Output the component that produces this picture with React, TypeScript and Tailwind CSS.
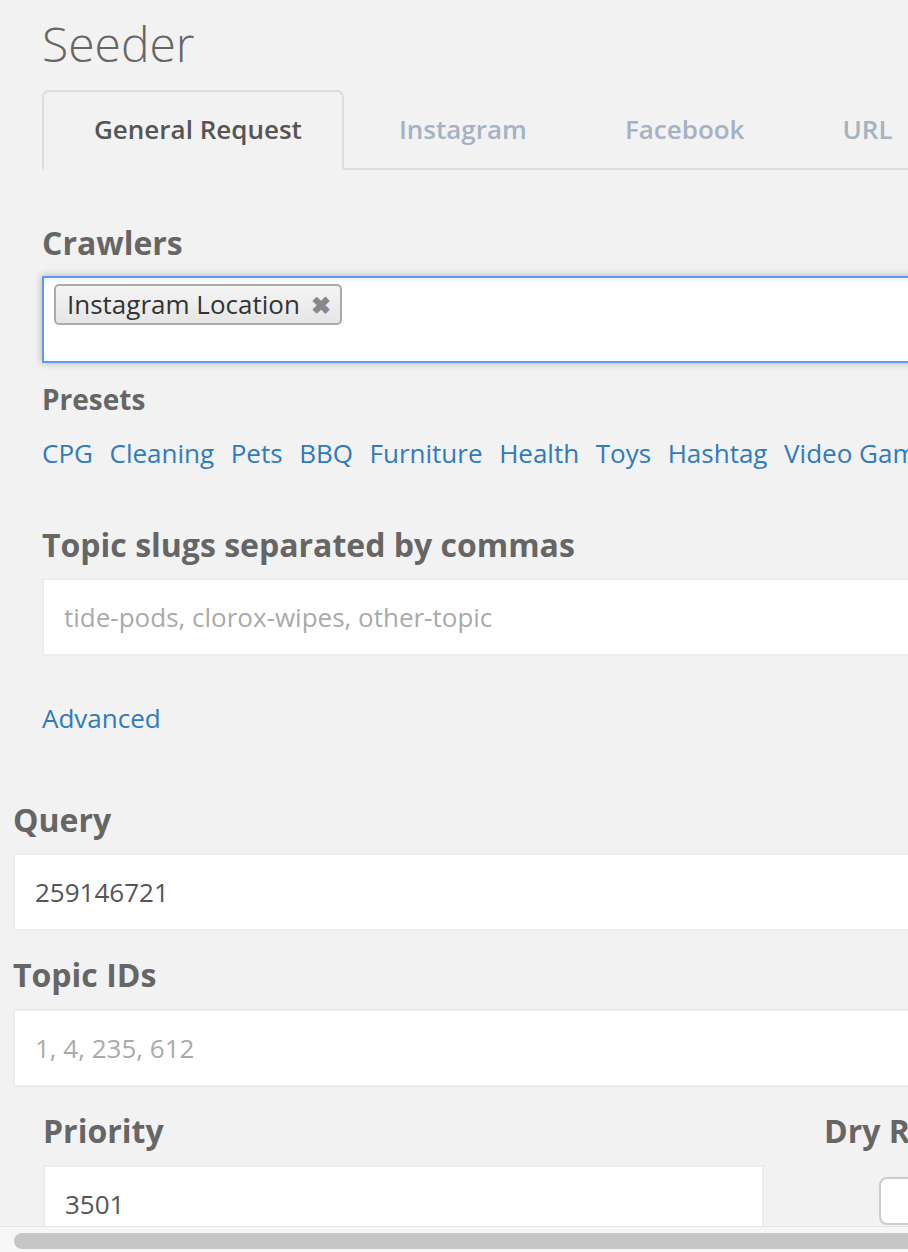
const presets = ['CPG', 'Cleaning', 'Pets', 'BBQ', 'Furniture', 'Health', 'Toys', 'Hashtag', 'Video Games', 'Beauty'];
const tabs = ['General Request', 'Instagram', 'Facebook', 'URL', 'Twitter'];

function Label({ children, className = '' }: { children: React.ReactNode; className?: string }) {
  return <div className={`text-[32px] leading-[32px] font-bold text-[#666] ${className}`}>{children}</div>;
}

function TextInput({ value, placeholder, className = '' }: { value?: string; placeholder?: string; className?: string }) {
  return (
    <div className={`h-[78px] bg-white border-2 border-[#ececec] flex items-center px-[20px] text-[26px] ${className}`}>
      {value ? <span className="text-[#555]">{value}</span> : <span className="text-[#aaa]">{placeholder}</span>}
    </div>
  );
}

export default function App() {
  return (
    <div className="relative w-[908px] h-[1252px] overflow-hidden bg-[#f2f2f2] font-['Open_Sans',sans-serif]">
      <div className="w-[1575px] pl-[13px]">
        {/* Tab panel */}
        <div className="pl-[29px]">
          <h1 className="pt-[20px] text-[48px] leading-[48px] font-light text-[#666]">Seeder</h1>

          <div className="mt-[22px] flex border-b-2 border-[#ddd]">
            {tabs.map((t, i) => (
              <div
                key={t}
                className={
                  i === 0
                    ? '-mb-[2px] mr-[6px] pl-[50px] pr-[40px] pt-[24px] pb-[26px] border-2 border-[#ddd] border-b-transparent rounded-t-[7px] bg-[#f2f2f2] text-[26px] leading-[26px] font-semibold text-[#555]'
                    : '-mb-[2px] px-[47px] pt-[24px] pb-[26px] border-2 border-transparent text-[26px] leading-[26px] font-semibold text-[#a6b2c4]'
                }
              >
                {t}
              </div>
            ))}
          </div>

          <Label className="mt-[57px]">Crawlers</Label>
          <div className="mt-[17px] h-[87px] bg-white border-2 border-[#5b9cf0] shadow-[0_0_8px_rgba(0,0,0,0.28),inset_0_6px_6px_-4px_rgba(0,0,0,0.08)] pl-[10px] pt-[6px]">
            <span className="inline-flex items-center h-[41px] pl-[11px] pr-[9px] gap-[11px] rounded-[5px] border-2 border-[#aaa] bg-gradient-to-b from-[#f4f4f4] to-[#e6e6e6] text-[26px] text-[#333]">
              Instagram Location
              <span className="text-[24px] font-bold text-[#888] leading-none">✖</span>
            </span>
          </div>

          <div className="mt-[22px] text-[28px] leading-[28px] font-bold text-[#666]">Presets</div>
          <div className="mt-[27px] flex gap-[16.6px] text-[26px] leading-[26px] text-[#2f7bbd] whitespace-nowrap">
            {presets.map((p) => (
              <span key={p}>{p}</span>
            ))}
          </div>

          <Label className="mt-[63px]">Topic slugs separated by commas</Label>
          <TextInput className="mt-[17px]" placeholder="tide-pods, clorox-wipes, other-topic" />

          <div className="mt-[49px] text-[26px] leading-[26px] text-[#2f7bbd]">Advanced</div>
        </div>

        <Label className="mt-[73px]">Query</Label>
        <TextInput className="mt-[17px]" value="259146721" />

        <Label className="mt-[28px]">Topic IDs</Label>
        <TextInput className="mt-[18px]" placeholder="1, 4, 235, 612" />

        {/* Priority / Dry Run row */}
        <div className="mt-[28px] grid grid-cols-2">
          <div className="px-[30px]">
            <Label>Priority</Label>
            <TextInput className="mt-[18px]" value="3501" />
          </div>
          <div className="px-[30px]">
            <Label>Dry Run</Label>
            <div className="mt-[30px] ml-[55px] w-[48px] h-[48px] rounded-[8px] border-2 border-[#ccc] bg-white" />
          </div>
        </div>
      </div>

      {/* overlay horizontal scrollbar */}
      <div className="absolute left-0 right-0 bottom-0 h-[26px] bg-[#f6f6f6] border-t border-[#e4e4e4] pt-[6px]">
        <div className="ml-[14px] w-[1000px] h-[16px] rounded-full bg-[#c6c6c6]" />
      </div>
    </div>
  );
}
